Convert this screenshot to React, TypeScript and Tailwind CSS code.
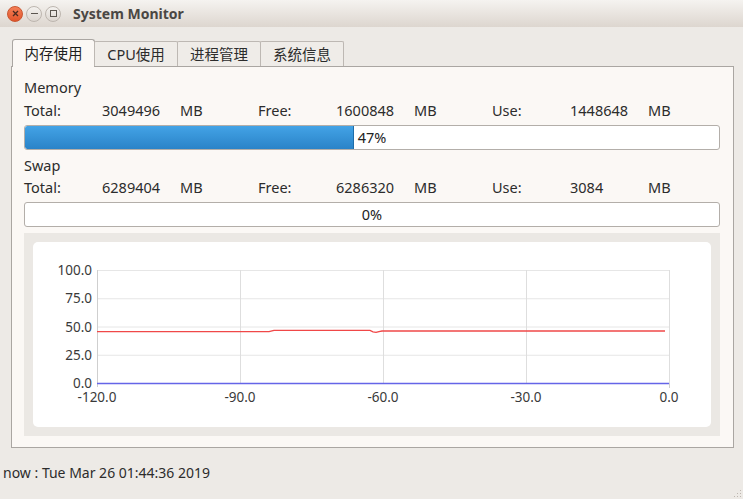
import React from 'react';

/**
 * System Monitor 窗口
 * 标题栏 + 标签页 + 内存/交换区信息 + 曲线图 + 状态栏
 */

const font = { fontFamily: '"Noto Sans", "Noto Sans CJK SC", sans-serif' };

const tabs = ['内存使用', 'CPU使用', '进程管理', '系统信息'];

type Row = { total: string; free: string; use: string };

const memory: Row = { total: '3049496', free: '1600848', use: '1448648' };
const swap: Row = { total: '6289404', free: '6286320', use: '3084' };

// 标题栏按钮
const TitleButtons: React.FC = () => (
  <div className="flex items-center gap-[3px] pl-[7px]">
    <div className="w-[16px] h-[16px] rounded-full bg-gradient-to-b from-[#f47e55] to-[#e2542a] border border-[#c9552f] flex items-center justify-center">
      <svg width="7" height="7" viewBox="0 0 7 7">
        <path d="M1 1L6 6M6 1L1 6" stroke="#4a2a20" strokeWidth="1.3" />
      </svg>
    </div>
    <div className="w-[16px] h-[16px] rounded-full bg-gradient-to-b from-[#f4f2ef] to-[#dcd6d0] border border-[#bdb6af] flex items-center justify-center">
      <div className="w-[7px] h-px bg-[#5b5650]" />
    </div>
    <div className="w-[16px] h-[16px] rounded-full bg-gradient-to-b from-[#f4f2ef] to-[#dcd6d0] border border-[#bdb6af] flex items-center justify-center">
      <div className="w-[7px] h-[7px] border border-[#5b5650]" />
    </div>
  </div>
);

// 信息行
const InfoRow: React.FC<{ row: Row }> = ({ row }) => {
  const cells = ['Total:', row.total, 'MB', 'Free:', row.free, 'MB', 'Use:', row.use, 'MB'];
  return (
    <div className="grid grid-cols-[repeat(9,78px)] h-[22px] items-center">
      {cells.map((c, i) => (
        <span key={i} className="whitespace-nowrap">
          {c}
        </span>
      ))}
    </div>
  );
};

// 进度条
const Progress: React.FC<{ value: number }> = ({ value }) => (
  <div className="relative h-[25px] w-[696px] bg-white border border-[#b3aea9] rounded-[3px] overflow-hidden">
    {value > 0 && (
      <div
        className="absolute left-0 top-0 bottom-0 bg-gradient-to-b from-[#43a3e6] to-[#2a83c8] border-r border-[#1f6da8] rounded-l-[2px]"
        style={{ width: `${Math.round(value * 7)}px` }}
      />
    )}
    <div className="relative h-full flex items-center justify-center text-[#222]">{value}%</div>
  </div>
);

// 曲线图
const Chart: React.FC = () => {
  const left = 64;
  const right = 636;
  const top = 28;
  const bottom = 141;
  const yTicks = [100, 75, 50, 25, 0];
  const xTicks = [-120, -90, -60, -30, 0];
  const yOf = (v: number) => bottom - ((bottom - top) * v) / 100;
  const xOf = (v: number) => left + ((right - left) * (v + 120)) / 120;

  return (
    <svg width="678" height="185" className="block">
      {yTicks.map((v) => (
        <line key={`h${v}`} x1={left} x2={right} y1={yOf(v) + 0.5} y2={yOf(v) + 0.5} stroke="#e6e6e6" />
      ))}
      {xTicks.map((v) => (
        <line key={`v${v}`} x1={xOf(v) + 0.5} x2={xOf(v) + 0.5} y1={top} y2={bottom} stroke="#dedede" />
      ))}
      <line x1={left + 0.5} x2={left + 0.5} y1={top} y2={bottom + 4} stroke="#cfcfcf" />
      <line x1={right + 0.5} x2={right + 0.5} y1={bottom} y2={bottom + 5} stroke="#cfcfcf" />
      <polyline
        points={`${left},89.7 236,89.7 241,88.3 337,88.3 340,89.8 343,90.3 346,89.6 349,89 632,89`}
        fill="none"
        stroke="#f04848"
        strokeWidth="1.3"
      />
      <line x1={left} x2={right} y1={bottom + 0.5} y2={bottom + 0.5} stroke="#6565e8" strokeWidth="1.3" />
      {yTicks.map((v) => (
        <text
          key={`yl${v}`}
          x={59}
          y={yOf(v) + 5}
          textAnchor="end"
          fontSize="13.5"
          fill="#3a3a3a"
          style={font}
        >
          {v.toFixed(1)}
        </text>
      ))}
      {xTicks.map((v) => (
        <text
          key={`xl${v}`}
          x={xOf(v)}
          y={160}
          textAnchor="middle"
          fontSize="13.5"
          fill="#3a3a3a"
          style={font}
        >
          {v.toFixed(1)}
        </text>
      ))}
    </svg>
  );
};

const App: React.FC = () => {
  return (
    <div className="w-[743px] h-[499px] bg-[#edeae6] flex flex-col text-[14.5px] text-[#2c2c2c] overflow-hidden" style={font}>
      {/* 标题栏 */}
      <div className="h-[27px] shrink-0 flex items-center bg-gradient-to-b from-[#f5f3f0] to-[#ddd6cf]">
        <TitleButtons />
        <span className="ml-[12px] font-bold text-[14px] text-[#4a4744]">System Monitor</span>
      </div>

      {/* 标签页 */}
      <div className="flex items-end pl-[12px] mt-[12px] h-[27px] relative z-10">
        {tabs.map((t, i) => (
          <div
            key={t}
            className={
              i === 0
                ? 'w-[83px] h-[28px] -mb-px pt-[1px] bg-[#fbf8f5] border border-b-0 border-[#aaa6a2] rounded-t-[3px] flex items-center justify-center text-[#1e1e1e]'
                : 'w-[84px] h-[25px] -ml-px pt-[2px] bg-[#efece8] border border-b-0 border-[#bdb8b3] rounded-t-[2px] flex items-center justify-center text-[#2c2c2c]'
            }
          >
            {t}
          </div>
        ))}
      </div>

      {/* 内容面板 */}
      <div className="ml-[11px] w-[723px] h-[382px] shrink-0 bg-[#fbf8f5] border border-[#aaa6a2] pl-[12px] pt-[11px]">
        <div className="h-[20px] flex items-center">Memory</div>
        <div className="mt-[2px]">
          <InfoRow row={memory} />
        </div>
        <div className="mt-[3px]">
          <Progress value={47} />
        </div>
        <div className="mt-[6px] h-[20px] flex items-center">Swap</div>
        <div className="mt-[1px]">
          <InfoRow row={swap} />
        </div>
        <div className="mt-[3px]">
          <Progress value={0} />
        </div>
        <div className="mt-[6px] w-[696px] h-[203px] bg-[#ebe8e4] p-[9px]">
          <div className="bg-white rounded-[5px] h-[185px]">
            <Chart />
          </div>
        </div>
      </div>

      {/* 状态栏 */}
      <div className="flex-1 flex items-center justify-between pl-[3px] pb-[2px] relative">
        <span className="text-[14px]">now : Tue Mar 26 01:44:36 2019</span>
        <svg width="10" height="10" className="absolute right-[1px] bottom-[1px]">
          {[
            [8, 2],
            [8, 5],
            [5, 5],
            [8, 8],
            [5, 8],
            [2, 8],
          ].map(([x, y], i) => (
            <rect key={i} x={x} y={y} width="1" height="1" fill="#bdb6af" />
          ))}
        </svg>
      </div>
    </div>
  );
};

export default App;
